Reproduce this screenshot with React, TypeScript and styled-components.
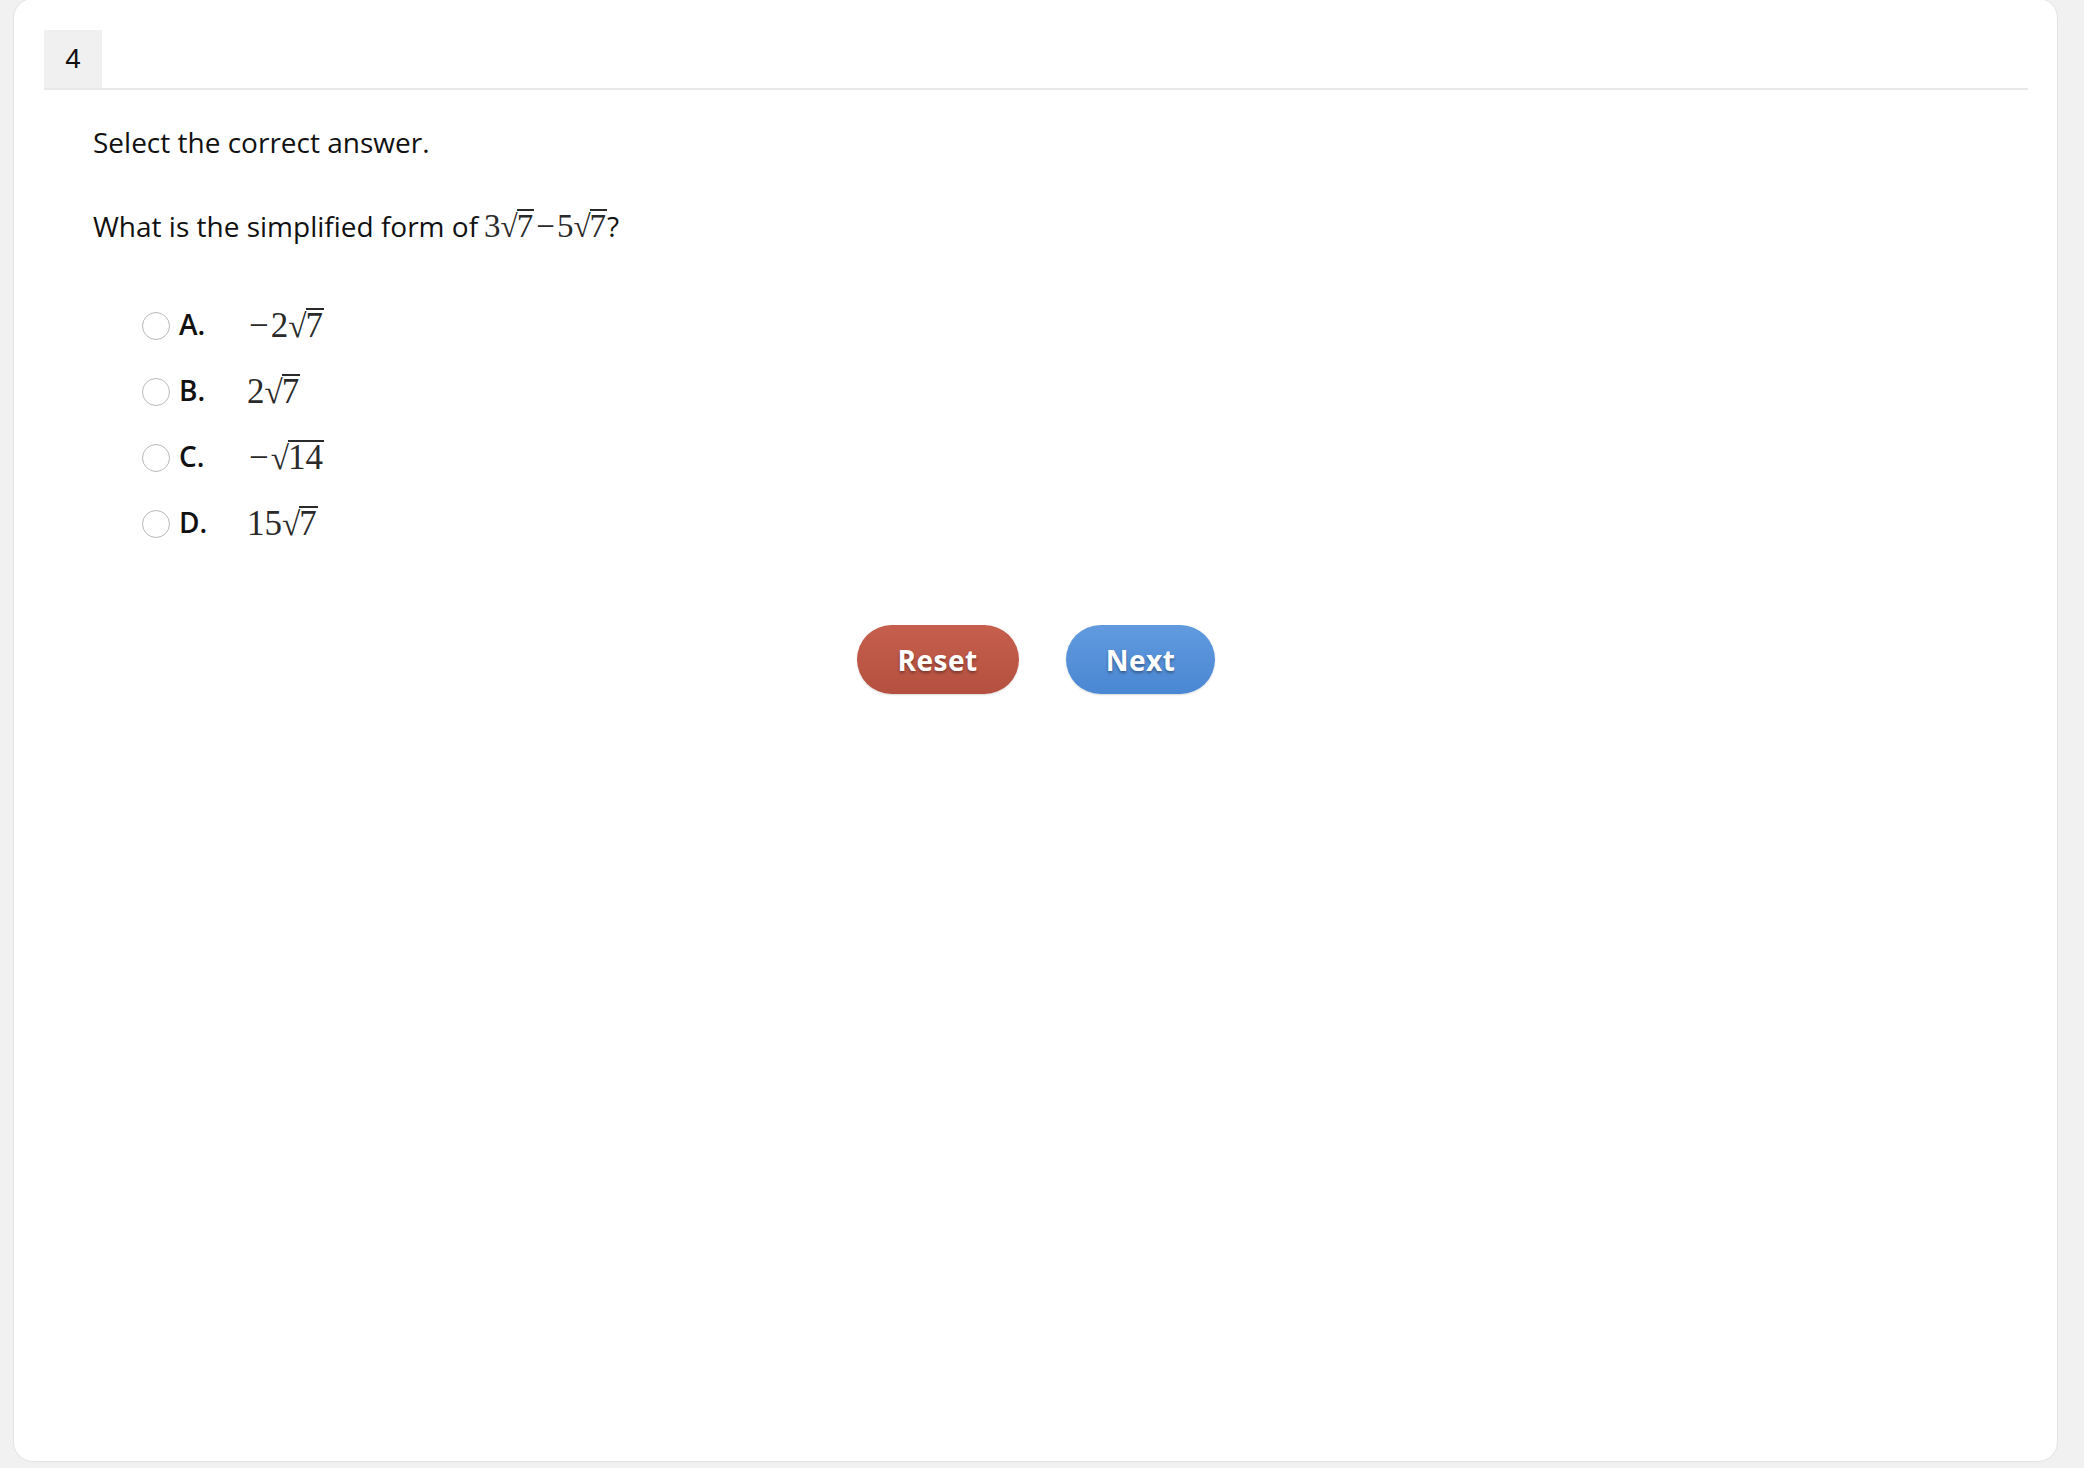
import React from "react";
import styled, { createGlobalStyle } from "styled-components";

const GlobalStyle = createGlobalStyle`
  html, body {
    margin: 0;
    padding: 0;
    background: #f1f1f1;
  }
  body {
    font-family: "Open Sans", "Liberation Sans", sans-serif;
    color: #111;
  }
`;

const Card = styled.div`
  box-sizing: border-box;
  margin: -2px 26px 0 13px;
  height: 1464px;
  background: #fff;
  border: 1px solid #e3e3e3;
  border-radius: 20px;
  padding: 31px 29px 0 30px;
`;

const Header = styled.div`
  display: flex;
  border-bottom: 2px solid #e8e8e8;
`;

const Tab = styled.div`
  width: 58px;
  height: 58px;
  background: #f0f0f0;
  display: flex;
  align-items: center;
  justify-content: center;
  font-family: "Liberation Sans", Arial, sans-serif;
  font-size: 28px;
  color: #111;
`;

const Body = styled.div`
  padding: 35px 0 0 49px;
`;

const Prompt = styled.p`
  margin: 0;
  font-size: 28px;
  line-height: 34px;
`;

const Question = styled(Prompt)`
  margin-top: 50px;
  display: flex;
  align-items: baseline;
`;

const Math = styled.span<{ $size: number; $gap?: number }>`
  font-family: "Liberation Serif", "Times New Roman", serif;
  font-size: ${(p) => p.$size}px;
  color: #2a2a2a;
  display: inline-flex;
  align-items: baseline;
  margin-left: ${(p) => p.$gap ?? 0}px;
`;

const RadSign = styled.span`
  font-size: 0.95em;
  margin-right: -1px;
`;

const Radicand = styled.span`
  border-top: 2px solid #2a2a2a;
  line-height: 0.92em;
  padding-right: 1px;
`;

const Minus = styled.span`
  margin: 0 2px;
`;

const Options = styled.div`
  margin-top: 61px;
  margin-left: 98px;
  display: flex;
  flex-direction: column;
  gap: 24px;
`;

const Option = styled.label`
  display: flex;
  align-items: center;
  height: 42px;
`;

const Radio = styled.span`
  box-sizing: border-box;
  width: 28px;
  height: 28px;
  border-radius: 50%;
  border: 1.5px solid #b9b9b9;
  background: #fff;
`;

const Letter = styled.span`
  width: 68px;
  margin-left: 9px;
  padding-bottom: 5px;
  font-size: 28px;
  font-weight: 600;
  color: #111;
`;

const Buttons = styled.div`
  display: flex;
  justify-content: center;
  gap: 47px;
  margin-top: 80px;
`;

const Button = styled.button<{ $tone: "red" | "blue" }>`
  height: 69px;
  padding: 0 40px;
  min-width: ${(p) => (p.$tone === "red" ? 162 : 149)}px;
  border: none;
  border-radius: 35px;
  font-family: "Open Sans", sans-serif;
  font-size: 28px;
  font-weight: 700;
  letter-spacing: 0.5px;
  color: #fff;
  text-shadow: 0 2px 3px rgba(0, 0, 0, 0.35);
  background: ${(p) =>
    p.$tone === "red"
      ? "linear-gradient(#c65f4d, #b4503f)"
      : "linear-gradient(#619ade, #4a87d3)"};
  box-shadow: 0 1px 2px rgba(0, 0, 0, 0.15);
`;

function Sqrt({ n }: { n: string }) {
  return (
    <>
      <RadSign>√</RadSign>
      <Radicand>{n}</Radicand>
    </>
  );
}

const choices = [
  { key: "A.", math: (<><Minus>−</Minus>2<Sqrt n="7" /></>) },
  { key: "B.", math: (<>2<Sqrt n="7" /></>) },
  { key: "C.", math: (<><Minus>−</Minus><Sqrt n="14" /></>) },
  { key: "D.", math: (<>15<Sqrt n="7" /></>) },
];

export default function App() {
  return (
    <>
      <GlobalStyle />
      <Card>
        <Header>
          <Tab>4</Tab>
        </Header>
        <Body>
          <Prompt>Select the correct answer.</Prompt>
          <Question>
            What is the simplified form of
            <Math $size={33} $gap={6}>
              3<Sqrt n="7" />
              <Minus>−</Minus>5<Sqrt n="7" />
            </Math>
            ?
          </Question>
        </Body>
        <Options>
          {choices.map((c) => (
            <Option key={c.key}>
              <Radio />
              <Letter>{c.key}</Letter>
              <Math $size={35}>{c.math}</Math>
            </Option>
          ))}
        </Options>
        <Buttons>
          <Button $tone="red">Reset</Button>
          <Button $tone="blue">Next</Button>
        </Buttons>
      </Card>
    </>
  );
}
